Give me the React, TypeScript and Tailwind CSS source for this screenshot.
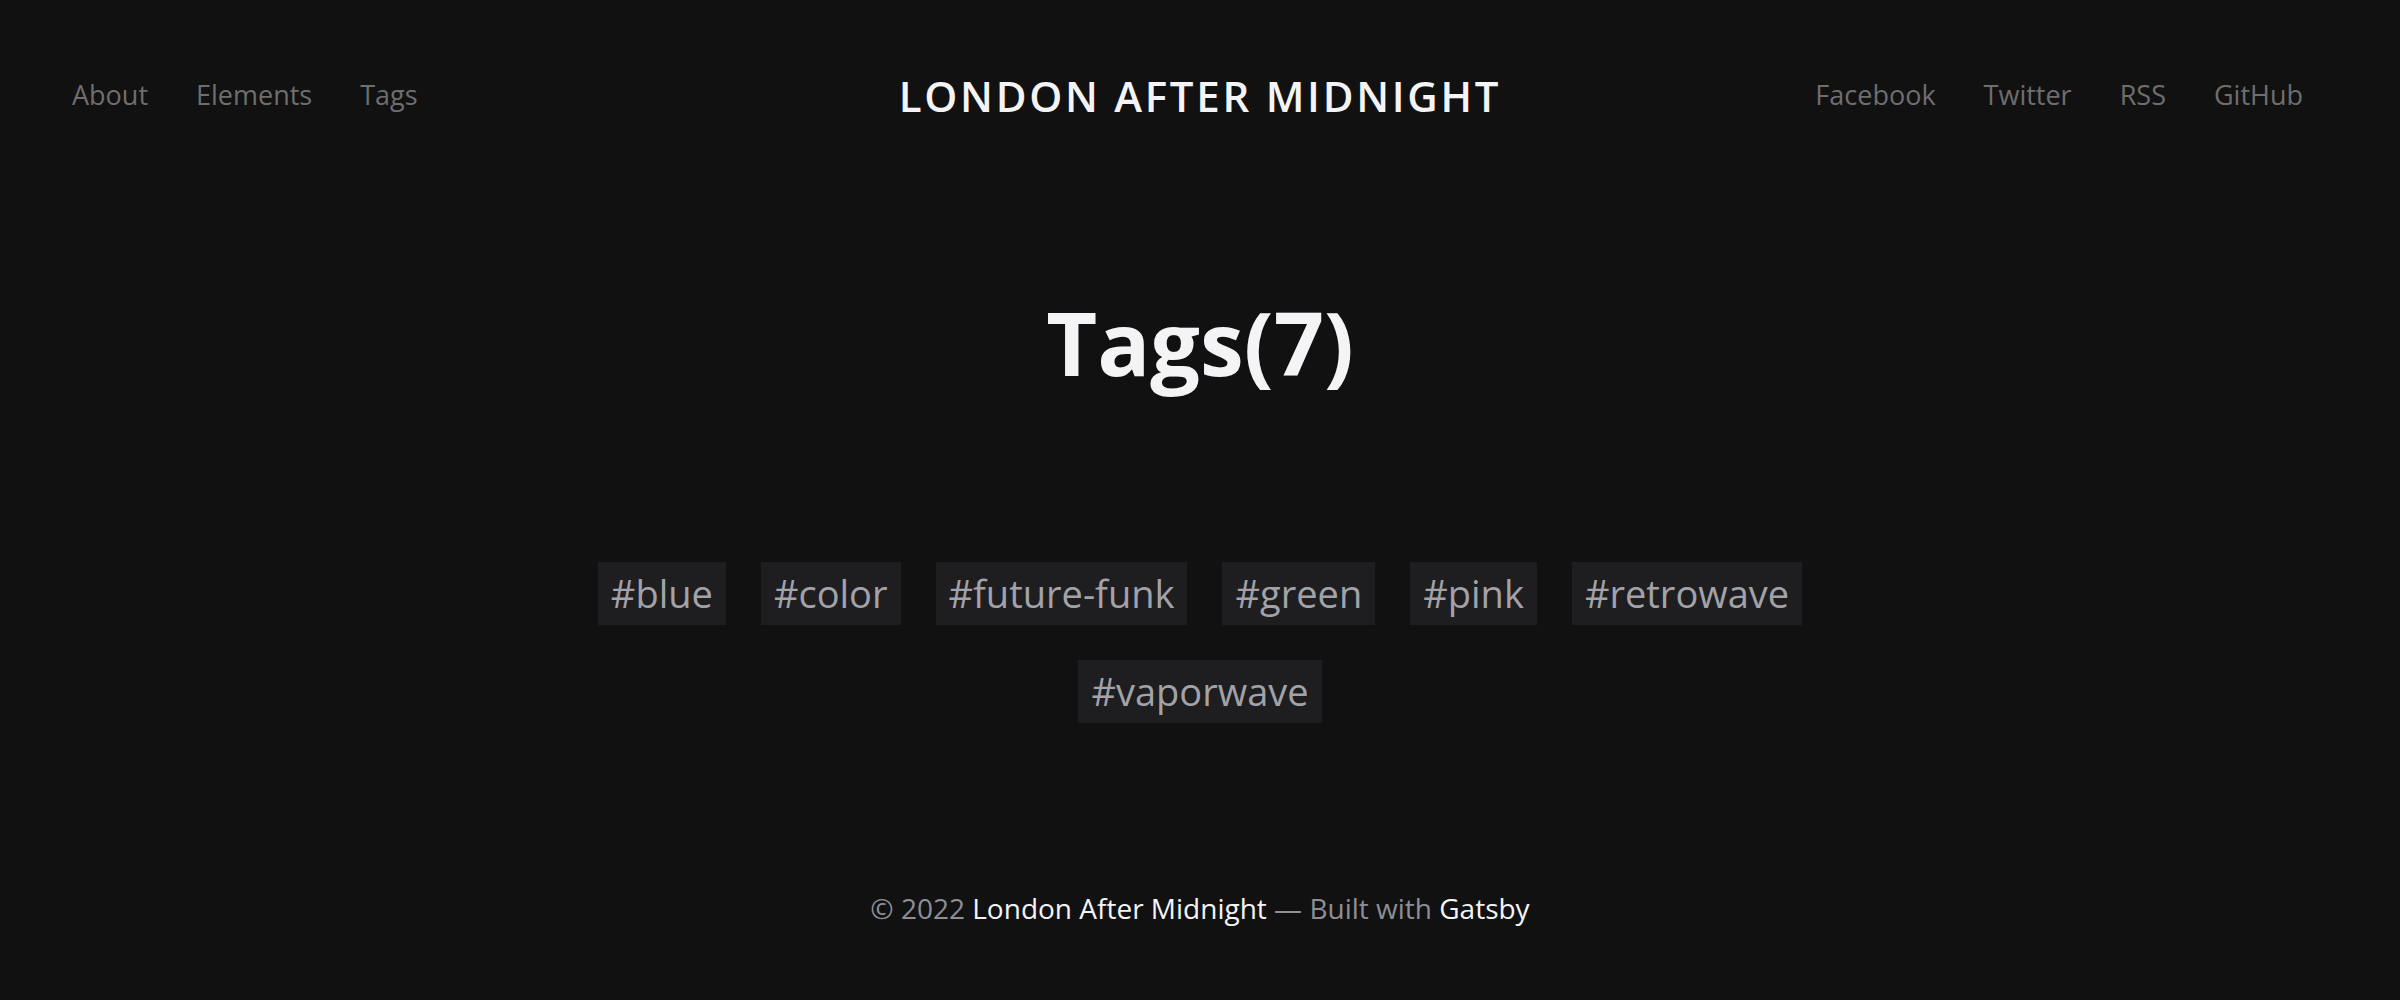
const leftLinks = ["About", "Elements", "Tags"];
const rightLinks = ["Facebook", "Twitter", "RSS", "GitHub"];
const tags = ["blue", "color", "future-funk", "green", "pink", "retrowave", "vaporwave"];

export default function App() {
  return (
    <div className="min-h-[1000px] bg-[#111111] font-['Open_Sans',sans-serif] text-[#f4f4f6]">
      <header className="relative flex h-[190px] items-center justify-between pl-[72px] pr-[97px]">
        <nav className="flex gap-[48px] text-[27px] text-[#6e6e6e]">
          {leftLinks.map((l) => (
            <a key={l} href="#">
              {l}
            </a>
          ))}
        </nav>
        <a
          href="#"
          className="absolute left-1/2 -translate-x-1/2 text-[42px] font-semibold tracking-[0.065em] text-[#f4f4f6]"
        >
          LONDON AFTER MIDNIGHT
        </a>
        <nav className="flex gap-[48px] text-[27px] text-[#6e6e6e]">
          {rightLinks.map((l) => (
            <a key={l} href="#">
              {l}
            </a>
          ))}
        </nav>
      </header>

      <main className="flex flex-col items-center">
        <h1 className="mt-[108px] text-[88px] font-bold leading-none">Tags(7)</h1>
        <ul className="mt-[176px] flex max-w-[1260px] flex-wrap justify-center gap-[35px]">
          {tags.map((t) => (
            <li key={t}>
              <a
                href="#"
                className="block h-[63px] bg-[#1e1e20] px-[13px] text-[38px] leading-[63px] text-[#a2a2a8]"
              >
                #{t}
              </a>
            </li>
          ))}
        </ul>
      </main>

      <footer className="mt-[164px] pb-[60px] text-center text-[28px] text-[#8e8e96]">
        © 2022 <a href="#" className="text-[#f4f4f6]">London After Midnight</a> — Built with{" "}
        <a href="#" className="text-[#f4f4f6]">Gatsby</a>
      </footer>
    </div>
  );
}
